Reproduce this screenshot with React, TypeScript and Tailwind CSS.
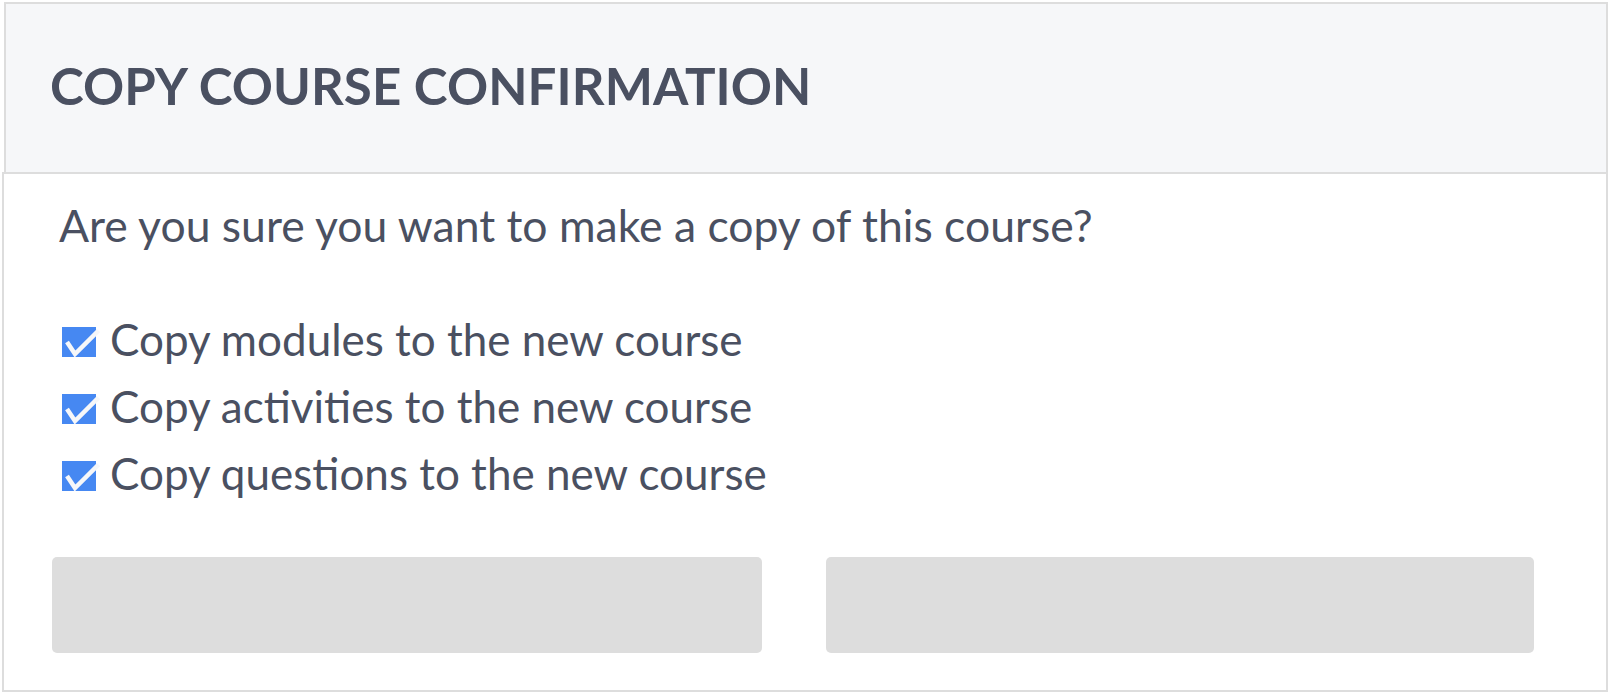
const ITEMS = [
  "Copy modules to the new course",
  "Copy activities to the new course",
  "Copy questions to the new course",
];

function CheckBox() {
  return (
    <svg width="40" height="40" viewBox="0 0 40 40" className="shrink-0 mt-[10px]">
      <rect x="2" y="4" width="34" height="30" fill="#4688f2" />
      <path d="M7 19 L15 31 L38.5 7.5" fill="none" stroke="#f6f7f9" strokeWidth="4.5" strokeLinejoin="miter" />
    </svg>
  );
}

export default function App() {
  return (
    <div
      className="w-[1610px] h-[694px] bg-white pt-[2px] text-[#4a5061]"
      style={{ fontFamily: "Lato, 'Open Sans', sans-serif" }}
    >
      {/* Header */}
      <div className="ml-[4px] w-[1604px] h-[170px] border-2 border-b-0 border-[#dddddd] bg-[#f6f7f9] flex items-center pl-[44px] pb-[5px]">
        <h1 className="text-[51px] font-bold leading-none tracking-[0.1px]">COPY COURSE CONFIRMATION</h1>
      </div>

      {/* Body */}
      <div className="ml-[2px] w-[1606px] h-[520px] border-2 border-[#dddddd] flex flex-col">
        <p className="pl-[55px] pt-[25px] text-[44.5px] leading-[52px]">
          Are you sure you want to make a copy of this course?
        </p>

        <div className="pl-[56px] pt-[62px] flex flex-col gap-[15px]">
          {ITEMS.map((label) => (
            <label key={label} className="flex items-start gap-[10px] text-[44px] leading-[52px]">
              <CheckBox />
              <span>{label}</span>
            </label>
          ))}
        </div>

        <div className="pl-[48px] pt-[58px] flex gap-[64px]">
          <button className="w-[710px] h-[96px] rounded-[5px] bg-[#dddddd]" />
          <button className="w-[708px] h-[96px] rounded-[5px] bg-[#dddddd]" />
        </div>
      </div>
    </div>
  );
}
